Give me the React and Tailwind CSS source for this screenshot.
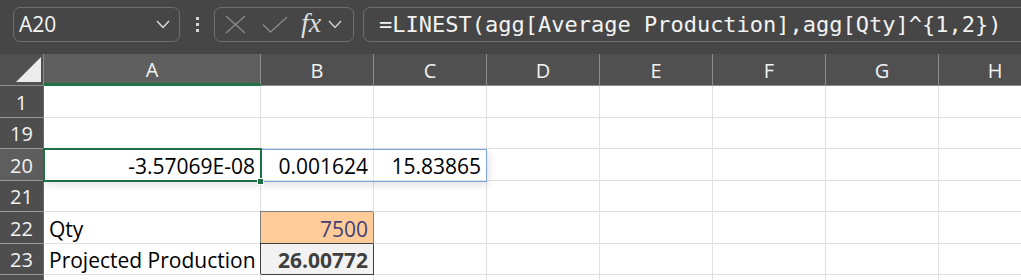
import React from "react";

const colW = ["w-[217px]", "w-[113px]", "w-[113px]", "w-[113px]", "w-[113px]", "w-[113px]", "w-[113px]", "w-[113px]"];
const letters = ["A", "B", "C", "D", "E", "F", "G", "H"];

const rows = [
  { n: "1", h: "h-[32px]", cells: {} },
  { n: "19", h: "h-[31px]", cells: {} },
  { n: "20", h: "h-[32px]", sel: true, cells: { 0: { t: "-3.57069E-08", r: true }, 1: { t: "0.001624", r: true }, 2: { t: "15.83865", r: true } } },
  { n: "21", h: "h-[31px]", cells: {} },
  { n: "22", h: "h-[32px]", cells: { 0: { t: "Qty" }, 1: { t: "7500", r: true, kind: "input" } } },
  { n: "23", h: "h-[31px]", cells: { 0: { t: "Projected Production" }, 1: { t: "26.00772", r: true, kind: "output" } } },
  { n: "", h: "h-[31px]", cells: {} },
];

function Chevron({ className }) {
  return (
    <svg width="14" height="9" viewBox="0 0 14 9" className={className}>
      <polyline points="1,1 7,7.5 13,1" fill="none" stroke="currentColor" strokeWidth="1.5" />
    </svg>
  );
}

function Cell({ i, data }) {
  const base = `${colW[i]} shrink-0 h-full flex items-center pt-[4px] border-r border-b px-[5px] text-[21px] whitespace-nowrap`;
  if (!data) return <div className={`${base} border-[#e1e1e1]`} />;
  if (data.kind === "input") {
    return (
      <div className={`${base} justify-end bg-[#ffcc99] text-[#3f3f76] border-[#7f7f7f] shadow-[-1px_-1px_0_0_#7f7f7f]`}>
        {data.t}
      </div>
    );
  }
  if (data.kind === "output") {
    return (
      <div className={`${base} justify-end font-bold bg-[#f2f2f2] text-[#3f3f3f] border-[#3f3f3f] shadow-[-1px_-1px_0_0_#3f3f3f]`}>
        {data.t}
      </div>
    );
  }
  return <div className={`${base} border-[#e1e1e1] text-black ${data.r ? "justify-end" : "justify-start"}`}>{data.t}</div>;
}

export default function App() {
  return (
    <div className="w-[1021px] h-[280px] overflow-hidden bg-white" style={{ fontFamily: '"Open Sans", "Noto Sans", sans-serif' }}>
      {/* formula bar */}
      <div className="h-[54px] bg-[#464646] flex items-start pt-[7px] pl-[13px]">
        <div className="w-[167px] h-[35px] shrink-0 border border-[#6e6e6e] rounded-[7px] flex items-center justify-between pl-[5px] pr-[9px]">
          <span className="text-[21px] text-[#f4f4f4] leading-none">A20</span>
          <Chevron className="text-[#dcdcdc]" />
        </div>
        <div className="w-[34px] h-[35px] shrink-0 flex flex-col items-center justify-center gap-[3px]">
          <span className="w-[3px] h-[3px] bg-[#d4d4d4]" />
          <span className="w-[3px] h-[3px] bg-[#d4d4d4]" />
          <span className="w-[3px] h-[3px] bg-[#d4d4d4]" />
        </div>
        <div className="w-[140px] h-[35px] shrink-0 border border-[#6e6e6e] rounded-[7px] flex items-center pl-[10px]">
          <svg width="21" height="19" viewBox="0 0 21 19" className="shrink-0">
            <line x1="1" y1="1" x2="20" y2="18" stroke="#8a8a8a" strokeWidth="1.3" />
            <line x1="20" y1="1" x2="1" y2="18" stroke="#8a8a8a" strokeWidth="1.3" />
          </svg>
          <svg width="26" height="17" viewBox="0 0 26 17" className="shrink-0 ml-[16px]">
            <polyline points="1,8.5 8.5,16 25,1" fill="none" stroke="#8a8a8a" strokeWidth="1.3" />
          </svg>
          <span
            className="ml-[13px] text-[28px] italic text-[#dedede] leading-none -mt-[4px]"
            style={{ fontFamily: '"Liberation Serif", "DejaVu Serif", serif' }}
          >
            fx
          </span>
          <Chevron className="text-[#cfcfcf] ml-[7px]" />
        </div>
        <div className="w-[720px] h-[35px] shrink-0 ml-[9px] border border-[#6e6e6e] rounded-[7px] flex items-center pl-[15px]">
          <span
            className="text-[22px] text-[#f2f2f2] whitespace-nowrap leading-none"
            style={{ fontFamily: '"DejaVu Sans Mono", "Liberation Mono", monospace' }}
          >
            =LINEST(agg[Average Production],agg[Qty]^{"{"}1,2{"}"})
          </span>
        </div>
      </div>

      {/* sheet */}
      <div className="relative">
        {/* header row */}
        <div className="flex h-[32px] bg-[#505050]">
          <div className="w-[44px] shrink-0 h-full border-r border-b border-[#8c8c8c] flex items-end justify-end pr-[2px] pb-[3px]">
            <svg width="25" height="25" viewBox="0 0 25 25">
              <polygon points="25,0 25,25 0,25" fill="#ececec" />
            </svg>
          </div>
          {letters.map((l, i) => (
            <div
              key={l}
              className={`${colW[i]} shrink-0 h-full flex items-center justify-center pt-[2px] text-[20px] text-[#f2f2f2] border-r border-[#8c8c8c] ${
                i === 0 ? "bg-[#5e5e5e] border-b-[3px] border-b-[#217346]" : "border-b border-b-[#8c8c8c]"
              }`}
            >
              {l}
            </div>
          ))}
        </div>

        {rows.map((row, ri) => (
          <div key={ri} className={`flex ${row.h}`}>
            <div
              className={`w-[44px] shrink-0 h-full flex items-center justify-center pt-[2px] text-[20px] text-[#f2f2f2] border-r border-r-[#6a6a6a] border-b border-b-[#9a9a9a] ${
                row.sel ? "bg-[#5e5e5e]" : "bg-[#4e4e4e]"
              }`}
            >
              {row.n}
            </div>
            {letters.map((l, i) => (
              <Cell key={l} i={i} data={row.cells[i]} />
            ))}
          </div>
        ))}

        {/* spill range outline A20:C20 */}
        <div className="absolute left-[43px] top-[95px] w-[444px] h-[33px] border border-[#7ea3e0] shadow-[2px_3px_8px_rgba(0,0,0,0.12)] pointer-events-none" />
        {/* active cell */}
        <div className="absolute left-[43px] top-[94px] w-[219px] h-[34px] border-2 border-[#1e7145] pointer-events-none" />
        <div className="absolute left-[257px] top-[124px] w-[7px] h-[7px] bg-[#1e7145] border border-white pointer-events-none" />
      </div>
    </div>
  );
}
